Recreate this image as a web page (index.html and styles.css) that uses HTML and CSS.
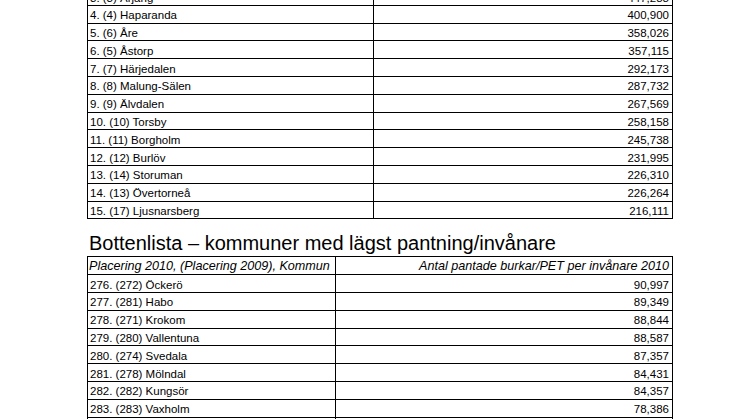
FILE: index.html
```html
<!DOCTYPE html>
<html lang="sv">
<head>
<meta charset="utf-8">
<title>Pantning per invånare</title>
<link rel="stylesheet" href="styles.css">
</head>
<body>
<div class="page">
  <table class="tbl tbl-top">
    <colgroup><col class="c1-top"><col></colgroup>
    <tr><td>3. (3) Årjäng</td><td class="num">447,288</td></tr>
    <tr><td>4. (4) Haparanda</td><td class="num">400,900</td></tr>
    <tr><td>5. (6) Åre</td><td class="num">358,026</td></tr>
    <tr><td>6. (5) Åstorp</td><td class="num">357,115</td></tr>
    <tr><td>7. (7) Härjedalen</td><td class="num">292,173</td></tr>
    <tr><td>8. (8) Malung-Sälen</td><td class="num">287,732</td></tr>
    <tr><td>9. (9) Älvdalen</td><td class="num">267,569</td></tr>
    <tr><td>10. (10) Torsby</td><td class="num">258,158</td></tr>
    <tr><td>11. (11) Borgholm</td><td class="num">245,738</td></tr>
    <tr><td>12. (12) Burlöv</td><td class="num">231,995</td></tr>
    <tr><td>13. (14) Storuman</td><td class="num">226,310</td></tr>
    <tr><td>14. (13) Övertorneå</td><td class="num">226,264</td></tr>
    <tr><td>15. (17) Ljusnarsberg</td><td class="num">216,111</td></tr>
  </table>

  <h2 class="title">Bottenlista – kommuner med lägst pantning/invånare</h2>

  <table class="tbl tbl-bottom">
    <colgroup><col class="c1-bottom"><col></colgroup>
    <tr class="head"><td>Placering 2010, (Placering 2009), Kommun</td><td class="num">Antal pantade burkar/PET per invånare 2010</td></tr>
    <tr><td>276. (272) Öckerö</td><td class="num">90,997</td></tr>
    <tr><td>277. (281) Habo</td><td class="num">89,349</td></tr>
    <tr><td>278. (271) Krokom</td><td class="num">88,844</td></tr>
    <tr><td>279. (280) Vallentuna</td><td class="num">88,587</td></tr>
    <tr><td>280. (274) Svedala</td><td class="num">87,357</td></tr>
    <tr><td>281. (278) Mölndal</td><td class="num">84,431</td></tr>
    <tr><td>282. (282) Kungsör</td><td class="num">84,357</td></tr>
    <tr><td>283. (283) Vaxholm</td><td class="num">78,386</td></tr>
    <tr><td>&nbsp;</td><td class="num">&nbsp;</td></tr>
  </table>
</div>
</body>
</html>
```

FILE: styles.css
```css
html, body {
  margin: 0;
  padding: 0;
  background: #ffffff;
}

body {
  font-family: "Liberation Sans", Arial, sans-serif;
  color: #000000;
  overflow: hidden;
}

.page {
  padding-left: 87px;
}

.tbl {
  border-collapse: collapse;
  width: 586px;
  table-layout: fixed;
  font-size: 11.5px;
}

.tbl-top {
  margin-top: -13px;
}

.c1-top {
  width: 286px;
}

.c1-bottom {
  width: 248px;
}

.tbl td {
  border: 1px solid #000000;
  height: 17.8px;
  line-height: 14px;
  padding: 2.5px 3px 0 2px;
  box-sizing: border-box;
  white-space: nowrap;
  overflow: hidden;
  vertical-align: top;
}

.tbl .num {
  text-align: right;
}

.head td {
  font-style: italic;
  font-size: 12.6px;
  padding-left: 1px;
  padding-top: 2px;
}

.title {
  font-size: 20px;
  font-weight: normal;
  line-height: 23px;
  margin: 13px 0 1px 2px;
}
```
